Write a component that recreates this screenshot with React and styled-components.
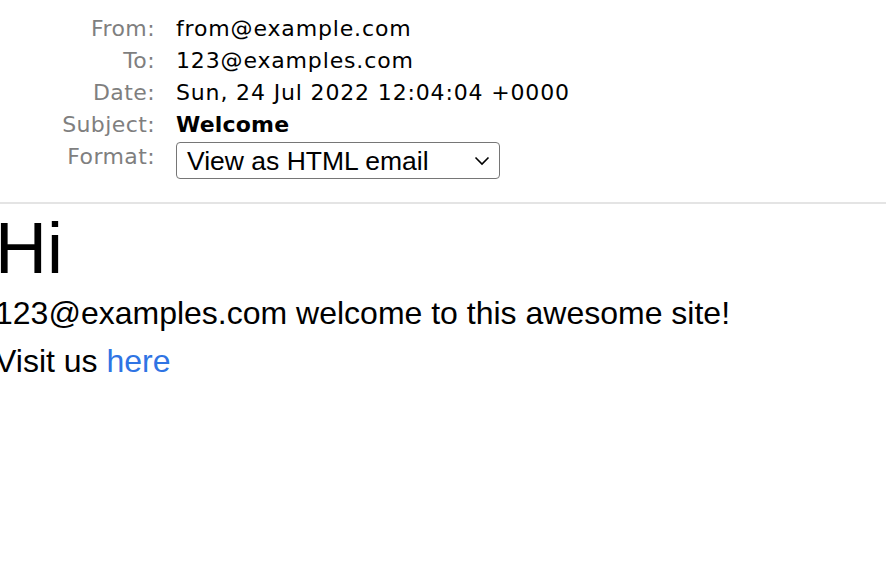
import React from 'react';
import styled, { createGlobalStyle } from 'styled-components';

const GlobalStyle = createGlobalStyle`
  html, body {
    margin: 0;
    padding: 0;
    background: #fff;
  }
`;

const Page = styled.div`
  width: 886px;
  min-height: 564px;
  overflow: hidden;
`;

const Header = styled.div`
  display: grid;
  grid-template-columns: 155px 1fr;
  column-gap: 21px;
  padding: 13px 0 23px;
  border-bottom: 2px solid #e4e4e4;
  font-family: "DejaVu Sans", "Lucida Grande", sans-serif;
  font-size: 22px;
  line-height: 32px;
  color: #000;
`;

const Label = styled.div`
  text-align: right;
  color: #7f7f7f;
  letter-spacing: 0.4px;
`;

const Value = styled.div`
  font-weight: ${p => (p.bold ? 700 : 400)};
  letter-spacing: ${p => (p.bold ? '0.2px' : '0.85px')};
  white-space: nowrap;
`;

const SelectBox = styled.div`
  position: relative;
  width: 324px;
  height: 37px;
  margin-top: 1px;
  box-sizing: border-box;
  border: 1.5px solid #767676;
  border-radius: 4px;
  display: flex;
  align-items: center;
  padding-left: 10px;
  font-family: "Liberation Sans", Arial, sans-serif;
  font-size: 26.5px;
  color: #000;

  svg {
    position: absolute;
    right: 9px;
    top: 50%;
    transform: translateY(-50%);
  }
`;

const Body = styled.div`
  font-family: "Liberation Sans", Arial, sans-serif;
  color: #000;
  margin-left: -5px;
`;

const Title = styled.h1`
  margin: 0;
  padding-top: 4px;
  font-size: 72px;
  font-weight: 400;
  line-height: 81px;
`;

const Para = styled.p`
  margin: 0;
  font-size: 32px;
  line-height: 48px;
  white-space: nowrap;
`;

const Link = styled.a`
  color: #2f74e4;
  text-decoration: none;
`;

const Chevron = () => (
  <svg width="16" height="10" viewBox="0 0 16 10" fill="none">
    <path d="M1.5 1.5 L8 8 L14.5 1.5" stroke="#000" strokeWidth="1.6" />
  </svg>
);

export default function App() {
  return (
    <Page>
      <GlobalStyle />
      <Header>
        <Label>From:</Label>
        <Value>from@example.com</Value>
        <Label>To:</Label>
        <Value>123@examples.com</Value>
        <Label>Date:</Label>
        <Value>Sun, 24 Jul 2022 12:04:04 +0000</Value>
        <Label>Subject:</Label>
        <Value bold>Welcome</Value>
        <Label>Format:</Label>
        <SelectBox>
          View as HTML email
          <Chevron />
        </SelectBox>
      </Header>
      <Body>
        <Title>Hi</Title>
        <Para>123@examples.com welcome to this awesome site!</Para>
        <Para>
          Visit us <Link href="#">here</Link>
        </Para>
      </Body>
    </Page>
  );
}
